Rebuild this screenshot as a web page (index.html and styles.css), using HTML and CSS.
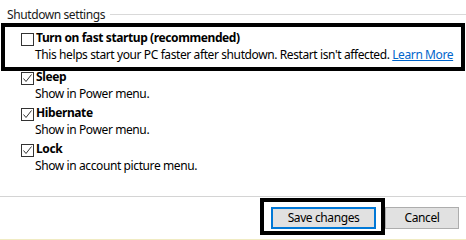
FILE: index.html
```html
<!DOCTYPE html>
<html lang="en">
<head>
<meta charset="utf-8">
<title>Shutdown settings</title>
<link rel="stylesheet" href="styles.css">
</head>
<body>
<div class="panel">
  <div class="group-header">
    <span class="group-title">Shutdown settings</span>
    <span class="group-rule"></span>
  </div>
  <ul class="options">
    <li class="option option-first">
      <div class="option-head">
        <span class="checkbox"></span>
        <span class="option-label">Turn on fast startup (recommended)</span>
      </div>
      <div class="option-desc">This helps start your PC faster after shutdown. Restart isn't affected. <a class="link" href="#">Learn More</a></div>
    </li>
    <li class="option">
      <div class="option-head">
        <span class="checkbox"><svg viewBox="0 0 13 13" width="13" height="13"><polyline points="2.5,6.5 5,9.5 10.5,2.5" fill="none" stroke="#333" stroke-width="1"/></svg></span>
        <span class="option-label">Sleep</span>
      </div>
      <div class="option-desc">Show in Power menu.</div>
    </li>
    <li class="option">
      <div class="option-head">
        <span class="checkbox"><svg viewBox="0 0 13 13" width="13" height="13"><polyline points="2.5,6.5 5,9.5 10.5,2.5" fill="none" stroke="#333" stroke-width="1"/></svg></span>
        <span class="option-label">Hibernate</span>
      </div>
      <div class="option-desc">Show in Power menu.</div>
    </li>
    <li class="option">
      <div class="option-head">
        <span class="checkbox"><svg viewBox="0 0 13 13" width="13" height="13"><polyline points="2.5,6.5 5,9.5 10.5,2.5" fill="none" stroke="#333" stroke-width="1"/></svg></span>
        <span class="option-label">Lock</span>
      </div>
      <div class="option-desc">Show in account picture menu.</div>
    </li>
  </ul>
  <div class="footer">
    <button class="btn btn-default" type="button">Save changes</button>
    <button class="btn" type="button">Cancel</button>
  </div>
</div>
<div class="highlight highlight-startup"></div>
<div class="highlight highlight-save"></div>
</body>
</html>
```
FILE: styles.css
```css
* { box-sizing: border-box; }
html, body {
  margin: 0;
  padding: 0;
  background: #fff;
}
body {
  width: 466px;
  height: 240px;
  overflow: hidden;
  position: relative;
  font-family: "Noto Sans", "Open Sans", sans-serif;
  font-size: 12px;
  letter-spacing: -0.4px;
  color: #000;
}
.panel {
  display: flex;
  flex-direction: column;
  height: 240px;
}
.group-header {
  display: flex;
  align-items: flex-start;
  padding: 6px 0 0 7px;
  height: 29px;
}
.group-title {
  line-height: 17px;
  color: #1a1a1a;
}
.group-rule {
  flex: 1;
  height: 1px;
  background: #d9d9d9;
  margin: 8px 0 0 5px;
}
.options {
  list-style: none;
  margin: 0;
  padding: 0 0 0 21px;
}
.option { margin-bottom: 2px; }
.option-first { margin-bottom: 5px; }
.option-head {
  display: flex;
  align-items: flex-start;
  gap: 1px;
  line-height: 17px;
}
.checkbox {
  width: 13px;
  height: 13px;
  border: 1px solid #333;
  background: #fff;
  margin-top: 4px;
  flex: none;
  display: block;
}
.checkbox svg {
  display: block;
  margin: -1px 0 0 -1px;
}
.option-label {
  font-weight: 700;
  padding-left: 1px;
}
.option-desc {
  line-height: 17px;
  padding-left: 14px;
}
.link {
  color: #0066cc;
  text-decoration: underline;
}
.footer {
  margin-top: auto;
  border-top: 1px solid #d4d4d4;
  border-bottom: 1px solid #f0ebc2;
  height: 44px;
  display: flex;
  justify-content: flex-end;
  align-items: flex-start;
  gap: 9px;
  padding: 10px 7px 0 0;
}
.btn {
  font-family: inherit;
  font-size: 12px;
  letter-spacing: -0.4px;
  color: #000;
  background: #e1e1e1;
  border: 1px solid #adadad;
  height: 22px;
  width: 74px;
  padding: 0;
  margin: 0;
  line-height: 18px;
}
.btn-default {
  width: 105px;
  border: 2px solid #0078d7;
}
.highlight {
  position: absolute;
  border: 4px solid #000;
  pointer-events: none;
}
.highlight-startup {
  left: 1px;
  top: 23px;
  width: 464px;
  height: 48px;
}
.highlight-save {
  left: 260px;
  top: 198px;
  width: 125px;
  height: 37px;
}
```
